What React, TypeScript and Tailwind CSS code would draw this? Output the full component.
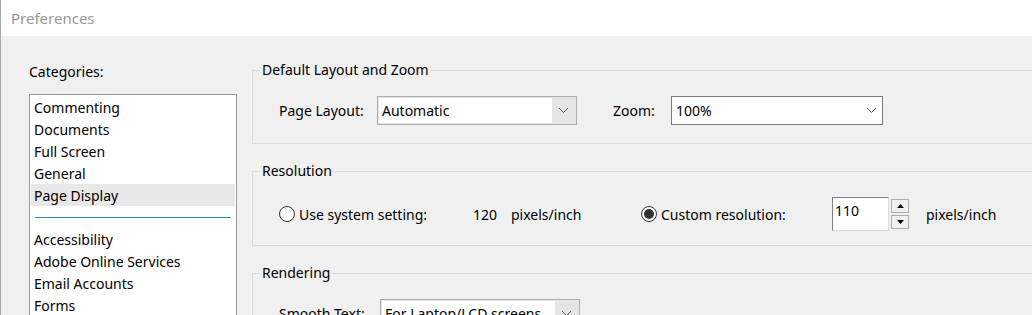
import React from 'react';

const font = "font-['Noto_Sans','Open_Sans',sans-serif]";

const topCategories = ['Commenting', 'Documents', 'Full Screen', 'General', 'Page Display'];
const moreCategories = ['Accessibility', 'Adobe Online Services', 'Email Accounts', 'Forms', 'Identity', 'Internet'];

const Chevron = () => (
  <svg width="11" height="7" viewBox="0 0 11 7" className="shrink-0">
    <polyline points="1,1 5.5,5.5 10,1" fill="none" stroke="#5a5a5a" strokeWidth="1" />
  </svg>
);

// readonly dropdown: grey face with white text field
const ButtonCombo = ({ value, width }: { value: string; width: string }) => (
  <div className={`flex h-[29px] ${width} border border-[#adadad] bg-[#e5e5e5] p-[1px]`}>
    <div className="flex flex-1 items-center bg-white pl-[3px]">{value}</div>
    <div className="flex w-[23px] items-center justify-center">
      <Chevron />
    </div>
  </div>
);

const EditCombo = ({ value, width }: { value: string; width: string }) => (
  <div className={`flex h-[29px] ${width} items-center border border-[#7a7a7a] bg-white pl-[4px] pr-[5px]`}>
    <span className="flex-1">{value}</span>
    <Chevron />
  </div>
);

const Radio = ({ checked }: { checked?: boolean }) => (
  <span className="flex h-[16px] w-[16px] shrink-0 items-center justify-center rounded-full border border-[#333] bg-white">
    {checked && <span className="h-[10px] w-[10px] rounded-full bg-[#333]" />}
  </span>
);

const Group = ({ title, children, pb, mt = '' }: { title: string; children: React.ReactNode; pb: string; mt?: string }) => (
  <fieldset className={`w-[820px] border border-[#dcdcdc] ${pb} ${mt}`}>
    <legend className="ml-[7px] px-[2px] leading-[20px]">{title}</legend>
    <div className="pl-[26px]">{children}</div>
  </fieldset>
);

export default function App() {
  return (
    <div className={`flex h-[315px] w-[1032px] flex-col overflow-hidden border-l border-[#a8a8a8] bg-[#f0f0f0] text-[14px] text-black ${font}`}>
      {/* Title bar */}
      <div className="flex h-[36px] shrink-0 items-center bg-white pl-[10px] text-[15px] text-[#999]">Preferences</div>

      <div className="flex flex-1">
        {/* Categories */}
        <div className="w-[251px] shrink-0 pl-[28px] pt-[26px]">
          <div className="leading-[20px]">Categories:</div>
          <div className="mt-[12px] h-[240px] w-[208px] border border-[#999] bg-white pt-[1px]">
            {topCategories.map((c) => (
              <div
                key={c}
                className={`mx-[1px] h-[22px] pl-[3px] leading-[23px] ${c === 'Page Display' ? 'bg-[#e8e8e8]' : ''}`}
              >
                {c}
              </div>
            ))}
            <div className="flex h-[22px] items-center px-[5px]">
              <div className="h-[1px] w-full bg-[#2a8aa6]" />
            </div>
            {moreCategories.map((c) => (
              <div key={c} className="mx-[1px] h-[22px] pl-[3px] leading-[23px]">
                {c}
              </div>
            ))}
          </div>
        </div>

        {/* Settings */}
        <div className="flex flex-col pt-[24px]">
          <Group title="Default Layout and Zoom" pb="pb-[18px]">
            <div className="mt-[16px] flex items-center">
              <span className="w-[98px]">Page Layout:</span>
              <ButtonCombo value="Automatic" width="w-[200px]" />
              <span className="ml-[36px] w-[58px]">Zoom:</span>
              <EditCombo value="100%" width="w-[212px]" />
            </div>
          </Group>

          <Group title="Resolution" pb="pb-[14px]" mt="mt-[17px]">
            <div className="mt-[16px] flex h-[34px] items-center">
              <span className="flex w-[194px] items-center gap-[4px]">
                <Radio />
                Use system setting:
              </span>
              <span className="w-[38px]">120</span>
              <span className="w-[130px]">pixels/inch</span>
              <span className="flex w-[191px] items-center gap-[4px]">
                <Radio checked />
                Custom resolution:
              </span>
              <div className="h-[34px] w-[57px] border border-t-[#828282] border-l-[#828282] border-r-[#dadada] border-b-[#dadada] bg-white pl-[2px] pt-[3px] leading-[20px]">
                110
              </div>
              <div className="ml-[2px] flex flex-col gap-[2px]">
                <div className="flex h-[14px] w-[18px] items-center justify-center border border-[#adadad] bg-[#f0f0f0]">
                  <svg width="7" height="4" viewBox="0 0 7 4"><polygon points="0,4 7,4 3.5,0" fill="#000" /></svg>
                </div>
                <div className="flex h-[14px] w-[18px] items-center justify-center border border-[#adadad] bg-[#f0f0f0]">
                  <svg width="7" height="4" viewBox="0 0 7 4"><polygon points="0,0 7,0 3.5,4" fill="#000" /></svg>
                </div>
              </div>
              <span className="ml-[17px]">pixels/inch</span>
            </div>
          </Group>

          <Group title="Rendering" pb="pb-[14px]" mt="mt-[17px]">
            <div className="mt-[16px] flex items-center">
              <span className="w-[101px]">Smooth Text:</span>
              <ButtonCombo value="For Laptop/LCD screens" width="w-[200px]" />
            </div>
          </Group>
        </div>
      </div>
    </div>
  );
}
